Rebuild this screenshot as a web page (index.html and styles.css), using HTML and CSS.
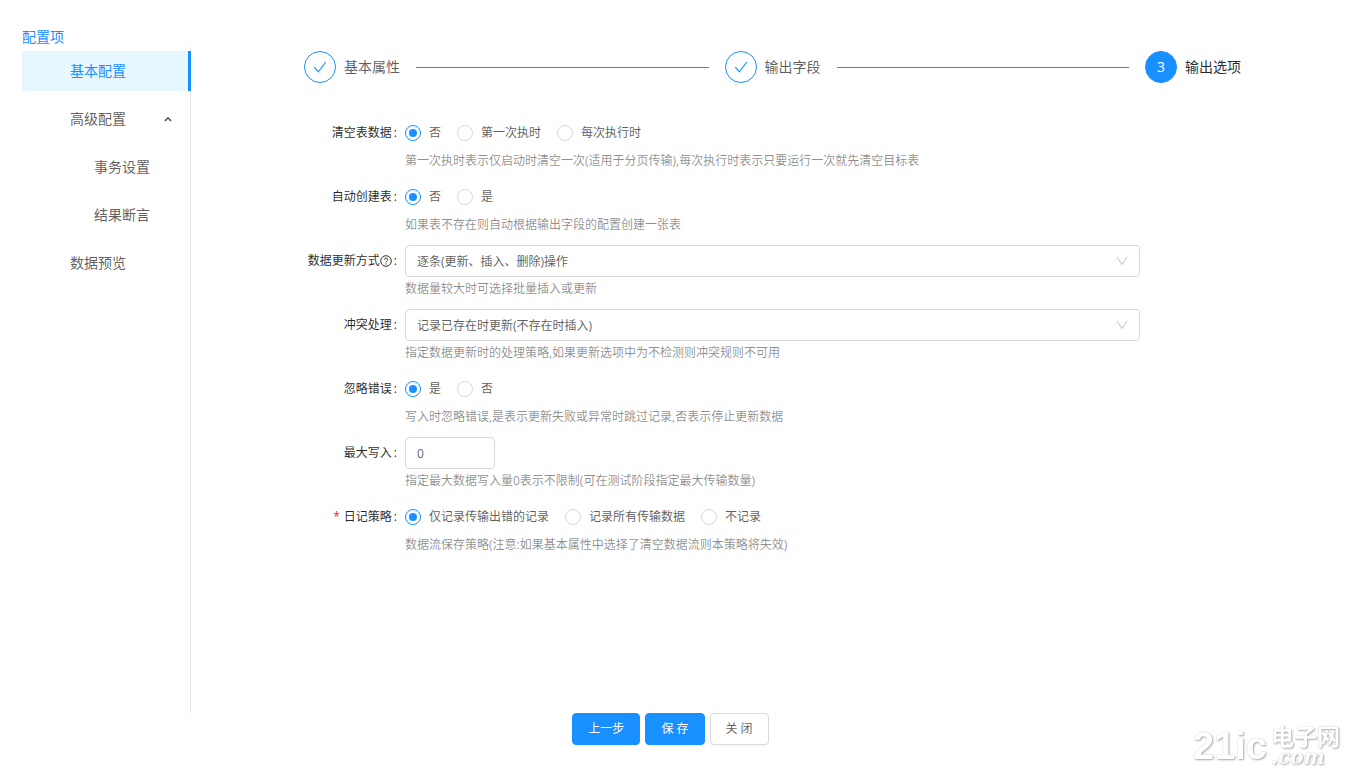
FILE: index.html
```html
<!DOCTYPE html>
<html lang="zh-CN">
<head>
    <meta charset="UTF-8">
    <meta name="viewport" content="width=device-width, initial-scale=1.0">
    <title>输出选项</title>
    <link rel="stylesheet" href="styles.css">
</head>
<body>
    <div class="page">
        <div class="content">
            <aside class="sidebar">
                <div class="sidebar-title">配置项</div>
                <nav class="menu">
                    <a class="menu-item active" href="#">基本配置</a>
                    <button class="menu-item menu-group" type="button" aria-expanded="true">
                        高级配置
                        <svg class="menu-arrow" viewBox="0 0 8 6" aria-hidden="true"><path d="M1 5l3-3.2L7 5"/></svg>
                    </button>
                    <a class="menu-item sub" href="#">事务设置</a>
                    <a class="menu-item sub" href="#">结果断言</a>
                    <a class="menu-item" href="#">数据预览</a>
                </nav>
            </aside>

            <main class="main">
                <ol class="steps">
                    <li class="step">
                        <span class="step-icon">
                            <svg viewBox="0 0 16 16" aria-hidden="true"><path d="M2.3 8.2l4 4.6L13.8 3"/></svg>
                        </span>
                        <span class="step-title">基本属性</span>
                    </li>
                    <li class="step">
                        <span class="step-icon">
                            <svg viewBox="0 0 16 16" aria-hidden="true"><path d="M2.3 8.2l4 4.6L13.8 3"/></svg>
                        </span>
                        <span class="step-title">输出字段</span>
                    </li>
                    <li class="step current">
                        <span class="step-icon">3</span>
                        <span class="step-title">输出选项</span>
                    </li>
                </ol>

                <form class="form" id="optionForm">
                    <div class="form-item" role="radiogroup" aria-labelledby="clearLabel">
                        <span class="form-label" id="clearLabel">清空表数据</span>
                        <div class="control">
                            <label class="radio"><input type="radio" name="clear" checked>否</label>
                            <label class="radio"><input type="radio" name="clear">第一次执时</label>
                            <label class="radio"><input type="radio" name="clear">每次执行时</label>
                        </div>
                        <p class="help">第一次执时表示仅启动时清空一次(适用于分页传输),每次执行时表示只要运行一次就先清空目标表</p>
                    </div>

                    <div class="form-item" role="radiogroup" aria-labelledby="createLabel">
                        <span class="form-label" id="createLabel">自动创建表</span>
                        <div class="control">
                            <label class="radio"><input type="radio" name="create" checked>否</label>
                            <label class="radio"><input type="radio" name="create">是</label>
                        </div>
                        <p class="help">如果表不存在则自动根据输出字段的配置创建一张表</p>
                    </div>

                    <div class="form-item">
                        <label class="form-label" for="updateMode">数据更新方式<svg class="question" viewBox="0 0 12 12" aria-hidden="true"><circle cx="6" cy="6" r="5.3"/><path d="M4.3 4.8C4.3 2.5 7.8 2.6 7.8 4.7 7.8 6 6 5.9 6 7.4M6 8.3v1.1"/></svg></label>
                        <div class="control select-box">
                            <select id="updateMode">
                                <option>逐条(更新、插入、删除)操作</option>
                            </select>
                            <svg class="select-arrow" viewBox="0 0 12 12" aria-hidden="true"><path d="M1 2l5 7.5L11 2"/></svg>
                        </div>
                        <p class="help">数据量较大时可选择批量插入或更新</p>
                    </div>

                    <div class="form-item">
                        <label class="form-label" for="conflict">冲突处理</label>
                        <div class="control select-box">
                            <select id="conflict">
                                <option>记录已存在时更新(不存在时插入)</option>
                            </select>
                            <svg class="select-arrow" viewBox="0 0 12 12" aria-hidden="true"><path d="M1 2l5 7.5L11 2"/></svg>
                        </div>
                        <p class="help">指定数据更新时的处理策略,如果更新选项中为不检测则冲突规则不可用</p>
                    </div>

                    <div class="form-item" role="radiogroup" aria-labelledby="ignoreLabel">
                        <span class="form-label" id="ignoreLabel">忽略错误</span>
                        <div class="control">
                            <label class="radio"><input type="radio" name="ignore" checked>是</label>
                            <label class="radio"><input type="radio" name="ignore">否</label>
                        </div>
                        <p class="help">写入时忽略错误,是表示更新失败或异常时跳过记录,否表示停止更新数据</p>
                    </div>

                    <div class="form-item">
                        <label class="form-label" for="maxWrite">最大写入</label>
                        <div class="control">
                            <input class="number" id="maxWrite" type="text" inputmode="numeric" value="0">
                        </div>
                        <p class="help">指定最大数据写入量0表示不限制(可在测试阶段指定最大传输数量)</p>
                    </div>

                    <div class="form-item" role="radiogroup" aria-labelledby="logLabel">
                        <span class="form-label required" id="logLabel">日记策略</span>
                        <div class="control">
                            <label class="radio"><input type="radio" name="log" checked>仅记录传输出错的记录</label>
                            <label class="radio"><input type="radio" name="log">记录所有传输数据</label>
                            <label class="radio"><input type="radio" name="log">不记录</label>
                        </div>
                        <p class="help">数据流保存策略(注意:如果基本属性中选择了清空数据流则本策略将失效)</p>
                    </div>
                </form>
            </main>
        </div>

        <footer class="actions">
            <button class="btn primary" type="button">上一步</button>
            <button class="btn primary" type="submit" form="optionForm">保 存</button>
            <button class="btn" type="button">关 闭</button>
        </footer>
    </div>

    <div class="watermark">
        <span class="mark-main">21ic</span>
        <span class="mark-side">
            <span class="mark-cn">电子网</span>
            <span class="mark-com">.com</span>
        </span>
    </div>
</body>
</html>
```
FILE: styles.css
```css
* {
    box-sizing: border-box;
    margin: 0;
    padding: 0;
}

body {
    font-family: "Open Sans", "Noto Sans CJK SC", sans-serif;
    font-size: 12px;
    line-height: 22px;
    color: rgba(0, 0, 0, 0.65);
    background-color: #fff;
}

button, input, select {
    font: inherit;
    color: inherit;
}

.page {
    display: flex;
    flex-direction: column;
    min-height: 100vh;
    padding: 26px 29px 26px 22px;
}

.content {
    display: flex;
    flex: 1;
}

/* 左侧菜单 */
.sidebar {
    display: flex;
    flex-direction: column;
    width: 169px;
    flex-shrink: 0;
    font-size: 14px;
}

.sidebar-title {
    height: 21px;
    color: #1890ff;
}

.menu {
    display: flex;
    flex-direction: column;
    flex: 1;
    gap: 8px;
    padding-top: 4px;
    border-right: 1px solid #e8e8e8;
}

.menu-item {
    display: flex;
    align-items: center;
    justify-content: space-between;
    height: 40px;
    margin-right: -1px;
    padding: 0 19px 0 48px;
    border: 0;
    background: none;
    color: inherit;
    text-decoration: none;
}

.menu-item.sub {
    padding-left: 72px;
}

.menu-item.active {
    color: #1890ff;
    background-color: #e6f7ff;
    border-right: 3px solid #1890ff;
}

.menu-arrow {
    width: 8px;
    height: 6px;
    fill: none;
    stroke: #555;
    stroke-width: 1.6;
}

.main {
    flex: 1;
    padding-top: 25px;
}

/* 步骤条 */
.steps {
    display: flex;
    gap: 16px;
    padding: 0 78px 0 113px;
    list-style: none;
}

.step {
    display: flex;
    align-items: center;
    flex: 1;
    font-size: 14px;
}

.step::after {
    content: "";
    flex: 1;
    height: 1px;
    margin-left: 16px;
    background-color: #1890ff;
}

.step:last-child {
    flex: none;
}

.step:last-child::after {
    display: none;
}

.step-icon {
    display: flex;
    align-items: center;
    justify-content: center;
    width: 32px;
    height: 32px;
    margin-right: 8px;
    border: 1px solid #1890ff;
    border-radius: 50%;
}

.step-icon svg {
    width: 16px;
    height: 16px;
    fill: none;
    stroke: #1890ff;
    stroke-width: 1.2;
}

.step.current {
    color: rgba(0, 0, 0, 0.85);
}

.current .step-icon {
    color: #fff;
    background-color: #1890ff;
}

/* 表单 */
.form {
    display: flex;
    flex-direction: column;
    gap: 8px;
    padding: 34px 179px 24px 0;
}

.form-item {
    display: grid;
    grid-template-columns: 214px 1fr;
    grid-template-rows: 32px 24px;
}

.form-label {
    display: flex;
    align-items: center;
    justify-content: flex-end;
    color: rgba(0, 0, 0, 0.85);
}

.form-label::after {
    content: ":";
    margin: 0 8px 0 2px;
}

.form-label.required::before {
    content: "*";
    margin-right: 4px;
    color: #f5222d;
}

.question {
    width: 12px;
    height: 12px;
    fill: none;
    stroke: #333;
}

.control {
    display: flex;
    align-items: center;
    gap: 16px;
}

.help {
    grid-column: 2;
    line-height: 24px;
    color: rgba(0, 0, 0, 0.45);
}

.radio {
    display: flex;
    align-items: center;
    gap: 8px;
}

.radio input {
    appearance: none;
    width: 16px;
    height: 16px;
    padding: 3px;
    border: 1px solid #d9d9d9;
    border-radius: 50%;
    background-clip: content-box;
}

.radio input:checked {
    border-color: #1890ff;
    background-color: #1890ff;
}

.select-box {
    position: relative;
}

select, .number {
    appearance: none;
    width: 100%;
    height: 32px;
    padding: 0 11px;
    border: 1px solid #d9d9d9;
    border-radius: 4px;
    background-color: #fff;
}

select {
    padding-top: 2px;
}

.number {
    width: 90px;
}

.select-arrow {
    position: absolute;
    top: 10px;
    right: 12px;
    width: 12px;
    height: 12px;
    fill: none;
    stroke: #bfbfbf;
    pointer-events: none;
}

/* 底部按钮 */
.actions {
    display: flex;
    justify-content: center;
    gap: 5px;
}

.btn {
    height: 32px;
    padding: 0 15px;
    border: 1px solid #d9d9d9;
    border-radius: 4px;
    background-color: #fff;
    box-shadow: 0 2px 0 rgba(0, 0, 0, 0.02);
}

.btn.primary {
    color: #fff;
    border-color: #1890ff;
    background-color: #1890ff;
}

/* 右下角水印 */
.watermark {
    position: fixed;
    right: 8px;
    bottom: 4px;
    display: flex;
    align-items: center;
    gap: 4px;
    color: #fff;
    font-weight: bold;
    text-shadow: 1px 1px 2px #aaa, 0 0 1px #bbb;
    pointer-events: none;
}

.mark-main {
    font-family: "Liberation Sans", sans-serif;
    font-size: 38px;
    line-height: 40px;
}

.mark-side {
    display: flex;
    flex-direction: column;
}

.mark-cn {
    font-size: 23px;
    line-height: 22px;
}

.mark-com {
    font-family: "DejaVu Serif", serif;
    font-size: 20px;
    font-style: italic;
    line-height: 20px;
}
```
